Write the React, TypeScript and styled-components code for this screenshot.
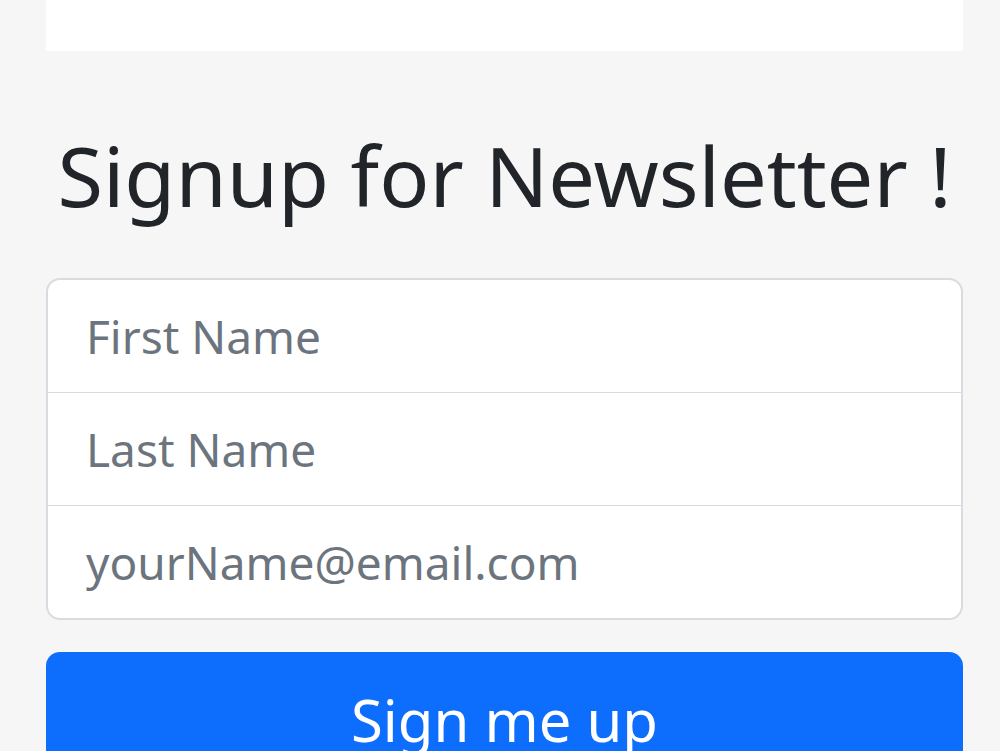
import styled, { createGlobalStyle } from "styled-components";

const GlobalStyle = createGlobalStyle`
  html, body {
    margin: 0;
    padding: 0;
    background: #f6f6f6;
  }
  body {
    font-family: "Noto Sans", "Open Sans", sans-serif;
    color: #212529;
  }
`;

const Page = styled.div`
  height: 751px;
  overflow: hidden;
  padding: 0 37px 0 46px;
`;

const TopCard = styled.div`
  height: 51px;
  background: #fff;
`;

const Title = styled.h1`
  margin: 74px 0 0;
  font-size: 83px;
  font-weight: 400;
  line-height: 1.2;
  text-align: center;
  color: #212529;
  white-space: nowrap;
`;

const Group = styled.div`
  margin-top: 53px;
  background: #fff;
  border: 2px solid #d8dbe0;
  border-radius: 14px;
  overflow: hidden;
`;

const Input = styled.input<{ $first?: boolean }>`
  display: block;
  box-sizing: border-box;
  width: 100%;
  height: ${({ $first }) => ($first ? "112px" : "113px")};
  padding: 0 38px;
  border: none;
  border-top: ${({ $first }) => ($first ? "none" : "1.5px solid #d8dbe0")};
  outline: none;
  background: transparent;
  font-family: inherit;
  font-size: 46px;
  color: #212529;
  &::placeholder {
    color: #6c757d;
  }
`;

const Button = styled.button`
  display: block;
  box-sizing: border-box;
  width: 100%;
  margin-top: 32px;
  height: 140px;
  padding: 33px 0 0;
  border: none;
  border-radius: 14px;
  background: #0d6efd;
  color: #fff;
  font-family: inherit;
  font-size: 58px;
  line-height: 70px;
  text-align: center;
  vertical-align: top;
  cursor: pointer;
  display: flex;
  justify-content: center;
  align-items: flex-start;
`;

export default function App() {
  return (
    <>
      <GlobalStyle />
      <Page>
        <TopCard />
        <Title>Signup for Newsletter !</Title>
        <Group>
          <Input $first type="text" placeholder="First Name" />
          <Input type="text" placeholder="Last Name" />
          <Input type="email" placeholder="yourName@email.com" />
        </Group>
        <Button type="submit">Sign me up</Button>
      </Page>
    </>
  );
}
